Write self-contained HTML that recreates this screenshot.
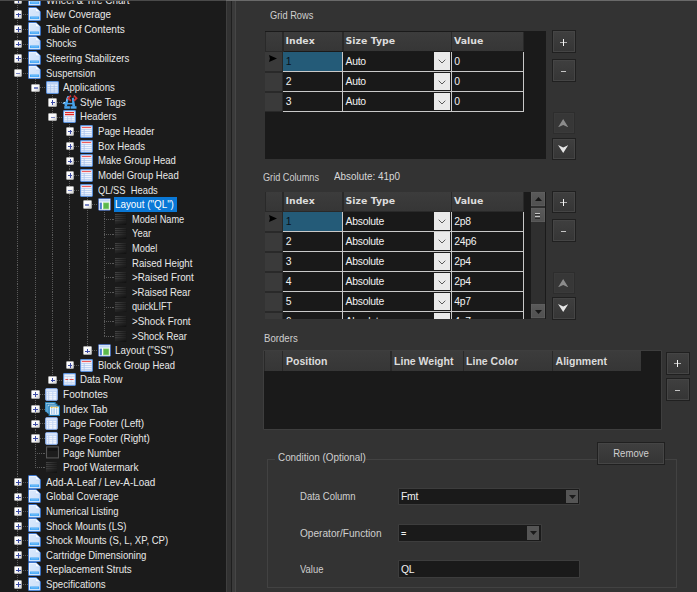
<!DOCTYPE html>
<html lang="en"><head><meta charset="utf-8"><title>Layout editor</title>
<style>
html,body{margin:0;padding:0;background:#333333;}
body{width:697px;height:592px;overflow:hidden;position:relative;font-family:"Liberation Sans",sans-serif;font-size:9.7px;color:#e4e4e4;}
#wrap{position:absolute;left:0;top:0;width:697px;height:592px;overflow:hidden;background:#333333;}
#tree{position:absolute;left:0;top:0;width:226px;height:592px;background:#1b1b1b;overflow:hidden;}
#tree div{position:absolute;}
.vl{width:1px;background:repeating-linear-gradient(to bottom,#5a5a5a 0,#5a5a5a 0.95px,transparent 0.95px,transparent 1.9px);}
.hl{height:1px;background:repeating-linear-gradient(to right,#5a5a5a 0,#5a5a5a 0.95px,transparent 0.95px,transparent 1.9px);}
.ex{width:8.8px;height:8.4px;box-sizing:border-box;border:0.7px solid #a9a9a9;border-radius:1px;background:linear-gradient(135deg,#ffffff 0%,#fbfbfb 50%,#cfcfcf 100%);}
.ex i{position:absolute;background:#3c4ca6;}
.ex i.h{left:1.4px;top:3.05px;width:4.6px;height:0.9px;}
.ex i.v{left:3.25px;top:1.2px;width:0.9px;height:4.6px;}
.ex.mi i.h{background:#7884c4;height:1.4px;top:2.9px;width:4px;left:1.7px;}
.ic{width:16px;height:14px;}
.ic svg{display:block;}
.t{white-space:nowrap;line-height:14.6px;height:14.6px;color:#e8e8e8;font-size:10.2px;transform:scaleX(0.94);transform-origin:0 50%;}
.ts{color:#ffffff;}
.sel{background:#0a78d6;}
#split{position:absolute;left:226px;top:0;width:10px;height:592px;background:#323232;}
#split i{position:absolute;top:0;height:592px;width:1px;}
#topline{position:absolute;left:226px;top:0;width:471px;height:1px;background:#6a6a6a;}
#topline2{position:absolute;left:0;top:0;width:226px;height:1px;background:#4a4a4a;}
#right{position:absolute;left:0;top:0;width:697px;height:592px;}
#right>div{position:absolute;}
.lb{white-space:nowrap;line-height:14.6px;color:#cfcfcf;font-size:10.2px;transform:scaleX(0.94);transform-origin:0 50%;margin-top:0.7px;}
.grid{background:#1a1a1a;overflow:hidden;}
.grid.dg{background:#1a1a1a;}
.grid div{position:absolute;}
.gh{background:linear-gradient(to bottom,#3c3c3c,#363636);}
.gh span{position:absolute;left:1.6px;top:1.9px;font-family:"DejaVu Sans","Liberation Sans",sans-serif;font-weight:bold;font-size:9.4px;line-height:14px;color:#dcdcdc;white-space:nowrap;}
.gh2{background:linear-gradient(to bottom,#3c3c3c,#363636);}
.gh2 span{position:absolute;left:2.5px;top:2.4px;font-family:"Liberation Sans",sans-serif;font-weight:bold;font-size:10.5px;line-height:14px;color:#dcdcdc;white-space:nowrap;}
.gb{box-shadow:0 0 0 0.6px #474747;}
.rh{background:#3a3a3a;}
.rh .arr{position:absolute;left:3.4px;top:2.9px;}
.cell{background:#191919;border-right:1px solid #c9c9c9;border-bottom:1px solid #c9c9c9;}
.cell span{position:absolute;left:2.4px;top:3.2px;line-height:14px;font-size:10.4px;letter-spacing:-0.25px;color:#f2f2f2;white-space:nowrap;}
.csel{background:#245b78;}
.csel span{color:#08121a;}
.dd{right:0.8px;top:0.6px;bottom:0.9px;width:16.1px;background:#e9e9e9;}
.dd svg{position:absolute;left:4px;top:7px;}
.sb{background:#2f2f2f;}
.sbb{left:0;width:14.6px;background:linear-gradient(to bottom,#5a5a5a,#505050);box-shadow:inset 0 0 0 0.6px #636363;}
.sbb svg{position:absolute;left:4px;top:5.2px;}
.sbt{left:0;width:14.6px;background:linear-gradient(to bottom,#5a5a5a,#505050);box-shadow:inset 0 0 0 0.6px #636363;}
.sbt i{position:absolute;left:4.6px;width:5.2px;height:1px;background:#c4c4c4;}
.sbt b{position:absolute;left:4.6px;width:5.2px;height:0.9px;background:#2c2c2c;}
.btn{background:linear-gradient(to bottom,#3f3f3f,#353535);border:1px solid #202020;box-sizing:border-box;box-shadow:inset 0 0 0 1px #454545;}
.btn.dis{background:#373737;border-color:#2d2d2d;box-shadow:inset 0 0 0 1px #3a3a3a;}
.btn i{position:absolute;}
.btn svg{position:absolute;left:50%;top:50%;margin:-4.5px 0 0 -6px;}
.ph{left:50%;top:50%;width:7.6px;height:1.1px;margin:0.1px 0 0 -4.2px;background:#b4b4b4;}
.pv{left:50%;top:50%;width:1.3px;height:6.8px;margin:-2.8px 0 0 -1.1px;background:#f4f4f4;}
.mh{left:50%;top:50%;width:4.8px;height:1.3px;margin:0.3px 0 0 -2.8px;background:#c4c4c4;}
.btn.txt span{position:absolute;left:0;right:0;top:4.3px;text-align:center;line-height:14px;color:#d0d0d0;font-size:10.2px;}
.gbx{border:1px solid #424242;box-sizing:border-box;}
.gbl{background:#333333;}
.inp{background:#1a1a1a;box-shadow:0 0 0 0.6px #454545;}
.inp span{position:absolute;left:1.8px;top:1.7px;line-height:14px;font-size:10.4px;letter-spacing:-0.25px;color:#f0f0f0;white-space:nowrap;}
.cb{position:absolute;right:1.2px;top:1.3px;bottom:1.3px;width:12.6px;background:#555555;}
.cb svg{position:absolute;left:3px;top:5px;}
</style></head>
<body><div id="wrap">
<div id="split"><i style="left:0;background:#3f3f3f"></i><i style="left:4.9px;background:#1f1f1f;width:1.3px"></i><i style="left:6.2px;background:#3a3a3a;width:3px"></i><i style="left:8.6px;background:#464646;width:0.9px"></i></div>
<div id="tree">
<div class="vl" style="left:17.40px;top:-10.00px;height:610.00px"></div>
<div class="vl" style="left:34.70px;top:78.54px;height:388.47px"></div>
<div class="vl" style="left:52.00px;top:93.15px;height:286.20px"></div>
<div class="vl" style="left:69.30px;top:122.37px;height:242.37px"></div>
<div class="vl" style="left:86.60px;top:195.42px;height:154.71px"></div>
<div class="vl" style="left:103.90px;top:210.03px;height:125.49px"></div>
<div class="hl" style="left:22.50px;top:-0.21px;width:5.70px"></div>
<div class="ex" style="left:13.60px;top:-4.16px"><i class="h"></i><i class="v"></i></div>
<div class="ic" style="left:28.20px;top:-7.61px"><svg width="13" height="14" viewBox="0 0 13 14"><defs><linearGradient id="u1" x1="0" x2="1" y1="0" y2="1"><stop offset="0" stop-color="#dbe9fc"/><stop offset="1" stop-color="#cbdff9"/></linearGradient></defs><path d="M1.1 0.5 H8 L12.4 4.7 V12.9 Q12.4 13.5 11.8 13.5 H1.1 Q0.5 13.5 0.5 12.9 V1.1 Q0.5 0.5 1.1 0.5 Z" fill="url(#u1)" stroke="#2f70d2" stroke-width="0.9"/><path d="M1.45 12.6 V1.45 H7.7" fill="none" stroke="#f3f8ff" stroke-width="0.8"/><path d="M8 0.9 V4.7 H12.1 Z" fill="#f7fbff"/><path d="M8 4.9 H12.1" stroke="#b4cff3" stroke-width="0.6"/><rect x="1.9" y="9.5" width="9.1" height="2.7" fill="#43a6f6"/><rect x="3" y="10.35" width="6.9" height="0.9" fill="#79c2fb"/><path d="M1.45 12.75 H11.5" stroke="#f3f8ff" stroke-width="0.6"/></svg></div>
<div class="t" style="left:45.80px;top:-6.41px;transform:scaleX(0.9691)">Wheel &amp; Tire Chart</div>
<div class="hl" style="left:22.50px;top:14.40px;width:5.70px"></div>
<div class="ex" style="left:13.60px;top:10.45px"><i class="h"></i><i class="v"></i></div>
<div class="ic" style="left:28.20px;top:7.00px"><svg width="13" height="14" viewBox="0 0 13 14"><defs><linearGradient id="u2" x1="0" x2="1" y1="0" y2="1"><stop offset="0" stop-color="#dbe9fc"/><stop offset="1" stop-color="#cbdff9"/></linearGradient></defs><path d="M1.1 0.5 H8 L12.4 4.7 V12.9 Q12.4 13.5 11.8 13.5 H1.1 Q0.5 13.5 0.5 12.9 V1.1 Q0.5 0.5 1.1 0.5 Z" fill="url(#u2)" stroke="#2f70d2" stroke-width="0.9"/><path d="M1.45 12.6 V1.45 H7.7" fill="none" stroke="#f3f8ff" stroke-width="0.8"/><path d="M8 0.9 V4.7 H12.1 Z" fill="#f7fbff"/><path d="M8 4.9 H12.1" stroke="#b4cff3" stroke-width="0.6"/><rect x="1.9" y="9.5" width="9.1" height="2.7" fill="#43a6f6"/><rect x="3" y="10.35" width="6.9" height="0.9" fill="#79c2fb"/><path d="M1.45 12.75 H11.5" stroke="#f3f8ff" stroke-width="0.6"/></svg></div>
<div class="t" style="left:45.80px;top:8.20px;transform:scaleX(0.9645)">New Coverage</div>
<div class="hl" style="left:22.50px;top:29.01px;width:5.70px"></div>
<div class="ex" style="left:13.60px;top:25.06px"><i class="h"></i><i class="v"></i></div>
<div class="ic" style="left:28.20px;top:21.61px"><svg width="13" height="14" viewBox="0 0 13 14"><defs><linearGradient id="u3" x1="0" x2="1" y1="0" y2="1"><stop offset="0" stop-color="#dbe9fc"/><stop offset="1" stop-color="#cbdff9"/></linearGradient></defs><path d="M1.1 0.5 H8 L12.4 4.7 V12.9 Q12.4 13.5 11.8 13.5 H1.1 Q0.5 13.5 0.5 12.9 V1.1 Q0.5 0.5 1.1 0.5 Z" fill="url(#u3)" stroke="#2f70d2" stroke-width="0.9"/><path d="M1.45 12.6 V1.45 H7.7" fill="none" stroke="#f3f8ff" stroke-width="0.8"/><path d="M8 0.9 V4.7 H12.1 Z" fill="#f7fbff"/><path d="M8 4.9 H12.1" stroke="#b4cff3" stroke-width="0.6"/><rect x="1.9" y="9.5" width="9.1" height="2.7" fill="#43a6f6"/><rect x="3" y="10.35" width="6.9" height="0.9" fill="#79c2fb"/><path d="M1.45 12.75 H11.5" stroke="#f3f8ff" stroke-width="0.6"/></svg></div>
<div class="t" style="left:45.80px;top:22.81px;transform:scaleX(0.9937)">Table of Contents</div>
<div class="hl" style="left:22.50px;top:43.62px;width:5.70px"></div>
<div class="ex" style="left:13.60px;top:39.67px"><i class="h"></i><i class="v"></i></div>
<div class="ic" style="left:28.20px;top:36.22px"><svg width="13" height="14" viewBox="0 0 13 14"><defs><linearGradient id="u4" x1="0" x2="1" y1="0" y2="1"><stop offset="0" stop-color="#dbe9fc"/><stop offset="1" stop-color="#cbdff9"/></linearGradient></defs><path d="M1.1 0.5 H8 L12.4 4.7 V12.9 Q12.4 13.5 11.8 13.5 H1.1 Q0.5 13.5 0.5 12.9 V1.1 Q0.5 0.5 1.1 0.5 Z" fill="url(#u4)" stroke="#2f70d2" stroke-width="0.9"/><path d="M1.45 12.6 V1.45 H7.7" fill="none" stroke="#f3f8ff" stroke-width="0.8"/><path d="M8 0.9 V4.7 H12.1 Z" fill="#f7fbff"/><path d="M8 4.9 H12.1" stroke="#b4cff3" stroke-width="0.6"/><rect x="1.9" y="9.5" width="9.1" height="2.7" fill="#43a6f6"/><rect x="3" y="10.35" width="6.9" height="0.9" fill="#79c2fb"/><path d="M1.45 12.75 H11.5" stroke="#f3f8ff" stroke-width="0.6"/></svg></div>
<div class="t" style="left:45.80px;top:37.42px;transform:scaleX(0.9126)">Shocks</div>
<div class="hl" style="left:22.50px;top:58.23px;width:5.70px"></div>
<div class="ex" style="left:13.60px;top:54.28px"><i class="h"></i><i class="v"></i></div>
<div class="ic" style="left:28.20px;top:50.83px"><svg width="13" height="14" viewBox="0 0 13 14"><defs><linearGradient id="u5" x1="0" x2="1" y1="0" y2="1"><stop offset="0" stop-color="#dbe9fc"/><stop offset="1" stop-color="#cbdff9"/></linearGradient></defs><path d="M1.1 0.5 H8 L12.4 4.7 V12.9 Q12.4 13.5 11.8 13.5 H1.1 Q0.5 13.5 0.5 12.9 V1.1 Q0.5 0.5 1.1 0.5 Z" fill="url(#u5)" stroke="#2f70d2" stroke-width="0.9"/><path d="M1.45 12.6 V1.45 H7.7" fill="none" stroke="#f3f8ff" stroke-width="0.8"/><path d="M8 0.9 V4.7 H12.1 Z" fill="#f7fbff"/><path d="M8 4.9 H12.1" stroke="#b4cff3" stroke-width="0.6"/><rect x="1.9" y="9.5" width="9.1" height="2.7" fill="#43a6f6"/><rect x="3" y="10.35" width="6.9" height="0.9" fill="#79c2fb"/><path d="M1.45 12.75 H11.5" stroke="#f3f8ff" stroke-width="0.6"/></svg></div>
<div class="t" style="left:45.80px;top:52.03px;transform:scaleX(0.9501)">Steering Stabilizers</div>
<div class="hl" style="left:22.50px;top:72.84px;width:5.70px"></div>
<div class="ex mi" style="left:13.60px;top:68.89px"><i class="h"></i></div>
<div class="ic" style="left:28.20px;top:65.44px"><svg width="13" height="14" viewBox="0 0 13 14"><defs><linearGradient id="u6" x1="0" x2="1" y1="0" y2="1"><stop offset="0" stop-color="#dbe9fc"/><stop offset="1" stop-color="#cbdff9"/></linearGradient></defs><path d="M1.1 0.5 H8 L12.4 4.7 V12.9 Q12.4 13.5 11.8 13.5 H1.1 Q0.5 13.5 0.5 12.9 V1.1 Q0.5 0.5 1.1 0.5 Z" fill="url(#u6)" stroke="#2f70d2" stroke-width="0.9"/><path d="M1.45 12.6 V1.45 H7.7" fill="none" stroke="#f3f8ff" stroke-width="0.8"/><path d="M8 0.9 V4.7 H12.1 Z" fill="#f7fbff"/><path d="M8 4.9 H12.1" stroke="#b4cff3" stroke-width="0.6"/><rect x="1.9" y="9.5" width="9.1" height="2.7" fill="#43a6f6"/><rect x="3" y="10.35" width="6.9" height="0.9" fill="#79c2fb"/><path d="M1.45 12.75 H11.5" stroke="#f3f8ff" stroke-width="0.6"/></svg></div>
<div class="t" style="left:45.80px;top:66.64px;transform:scaleX(0.9277)">Suspension</div>
<div class="hl" style="left:39.80px;top:87.45px;width:5.70px"></div>
<div class="ex mi" style="left:30.90px;top:83.50px"><i class="h"></i></div>
<div class="ic" style="left:45.50px;top:80.55px"><svg width="13" height="13" viewBox="0 0 13 13"><rect x="0.6" y="0.6" width="11.8" height="11.8" rx="0.8" fill="#e6effc" stroke="#5a90db" stroke-width="1.1"/><rect x="1.3" y="1.3" width="10.4" height="2.2" fill="#b9d0f3"/><path d="M1.3 5.6H11.7M1.3 7.8H11.7M1.3 10H11.7M4.6 3.6V11.7M8.2 3.6V11.7" stroke="#a9c4ee" stroke-width="0.8" fill="none"/></svg></div>
<div class="t" style="left:63.10px;top:81.25px;transform:scaleX(0.9429)">Applications</div>
<div class="hl" style="left:57.10px;top:102.06px;width:5.70px"></div>
<div class="ex" style="left:48.20px;top:98.11px"><i class="h"></i><i class="v"></i></div>
<div class="ic" style="left:61.50px;top:94.96px"><svg width="16" height="14" viewBox="0 0 16 14"><g fill="#48a4ec"><path d="M2.4 11.4L5.3 0.9H7.3L4.9 11.4Z"/><path d="M9.9 3.2L11.7 2.4L13.2 11.4H10.4Z"/><rect x="2.3" y="11.2" width="5.6" height="2.5"/><rect x="8.6" y="11.2" width="5.9" height="2.5"/><rect x="4.4" y="7.9" width="6.6" height="1.5"/><path d="M0.2 8.2L3.6 6.4L4.4 7.9L3.4 10.1Z"/></g><path d="M4.3 6L5.4 2.2" stroke="#9fd2fa" stroke-width="0.7"/><path d="M1.2 8.2L2.9 7.4" stroke="#eaf7ff" stroke-width="0.9"/><path d="M8.9 0.6L6.2 3.2L8.9 5.9" stroke="#cc3636" stroke-width="1.7" fill="none"/><path d="M11.9 0.6L14.6 3.2L11.9 5.9" stroke="#cc3636" stroke-width="1.7" fill="none"/></svg></div>
<div class="t" style="left:80.40px;top:95.86px;transform:scaleX(0.9762)">Style Tags</div>
<div class="hl" style="left:57.10px;top:116.67px;width:5.70px"></div>
<div class="ex mi" style="left:48.20px;top:112.72px"><i class="h"></i></div>
<div class="ic" style="left:62.80px;top:109.77px"><svg width="13" height="13" viewBox="0 0 13 13"><rect x="0.6" y="0.6" width="11.8" height="11.8" rx="0.8" fill="#fbfcff" stroke="#5a90db" stroke-width="1.1"/><path d="M2 2.6H11M2 4.6H11" stroke="#e02828" stroke-width="1.1"/><path d="M1.3 6.6H11.7M1.3 8.8H11.7M1.3 10.6H11.7M4.6 6.6V11.7M8.2 6.6V11.7" stroke="#b4cbf0" stroke-width="0.8" fill="none"/></svg></div>
<div class="t" style="left:80.40px;top:110.47px;transform:scaleX(0.9477)">Headers</div>
<div class="hl" style="left:74.40px;top:131.28px;width:5.70px"></div>
<div class="ex" style="left:65.50px;top:127.33px"><i class="h"></i><i class="v"></i></div>
<div class="ic" style="left:80.10px;top:125.18px"><svg width="13" height="13" viewBox="0 0 13 13"><rect x="0.6" y="0.6" width="11.8" height="11.8" rx="0.8" fill="#f6f9ff" stroke="#5a90db" stroke-width="1.1"/><path d="M1.8 2.5H11.2" stroke="#ee5c5c" stroke-width="1.2"/><path d="M1.3 4.6H11.7M1.3 6.6H11.7M1.3 8.6H11.7M1.3 10.4H11.7M4.2 4.2V11.7" stroke="#a9c4ee" stroke-width="0.8" fill="none"/></svg></div>
<div class="t" style="left:97.70px;top:125.08px;transform:scaleX(0.9393)">Page Header</div>
<div class="hl" style="left:74.40px;top:145.89px;width:5.70px"></div>
<div class="ex" style="left:65.50px;top:141.94px"><i class="h"></i><i class="v"></i></div>
<div class="ic" style="left:80.10px;top:139.79px"><svg width="13" height="13" viewBox="0 0 13 13"><rect x="0.6" y="0.6" width="11.8" height="11.8" rx="0.8" fill="#f6f9ff" stroke="#5a90db" stroke-width="1.1"/><path d="M1.8 2.5H11.2" stroke="#ee5c5c" stroke-width="1.2"/><path d="M1.3 4.6H11.7M1.3 6.6H11.7M1.3 8.6H11.7M1.3 10.4H11.7M4.2 4.2V11.7" stroke="#a9c4ee" stroke-width="0.8" fill="none"/></svg></div>
<div class="t" style="left:97.70px;top:139.69px;transform:scaleX(0.9450)">Box Heads</div>
<div class="hl" style="left:74.40px;top:160.50px;width:5.70px"></div>
<div class="ex" style="left:65.50px;top:156.55px"><i class="h"></i><i class="v"></i></div>
<div class="ic" style="left:80.10px;top:154.40px"><svg width="13" height="13" viewBox="0 0 13 13"><rect x="0.6" y="0.6" width="11.8" height="11.8" rx="0.8" fill="#f6f9ff" stroke="#5a90db" stroke-width="1.1"/><path d="M1.8 2.5H11.2" stroke="#ee5c5c" stroke-width="1.2"/><path d="M1.3 4.6H11.7M1.3 6.6H11.7M1.3 8.6H11.7M1.3 10.4H11.7M4.2 4.2V11.7" stroke="#a9c4ee" stroke-width="0.8" fill="none"/></svg></div>
<div class="t" style="left:97.70px;top:154.30px;transform:scaleX(0.9357)">Make Group Head</div>
<div class="hl" style="left:74.40px;top:175.11px;width:5.70px"></div>
<div class="ex" style="left:65.50px;top:171.16px"><i class="h"></i><i class="v"></i></div>
<div class="ic" style="left:80.10px;top:169.01px"><svg width="13" height="13" viewBox="0 0 13 13"><rect x="0.6" y="0.6" width="11.8" height="11.8" rx="0.8" fill="#f6f9ff" stroke="#5a90db" stroke-width="1.1"/><path d="M1.8 2.5H11.2" stroke="#ee5c5c" stroke-width="1.2"/><path d="M1.3 4.6H11.7M1.3 6.6H11.7M1.3 8.6H11.7M1.3 10.4H11.7M4.2 4.2V11.7" stroke="#a9c4ee" stroke-width="0.8" fill="none"/></svg></div>
<div class="t" style="left:97.70px;top:168.91px;transform:scaleX(0.9375)">Model Group Head</div>
<div class="hl" style="left:74.40px;top:189.72px;width:5.70px"></div>
<div class="ex mi" style="left:65.50px;top:185.77px"><i class="h"></i></div>
<div class="ic" style="left:80.10px;top:183.62px"><svg width="13" height="13" viewBox="0 0 13 13"><rect x="0.6" y="0.6" width="11.8" height="11.8" rx="0.8" fill="#f6f9ff" stroke="#5a90db" stroke-width="1.1"/><path d="M1.8 2.5H11.2" stroke="#ee5c5c" stroke-width="1.2"/><path d="M1.3 4.6H11.7M1.3 6.6H11.7M1.3 8.6H11.7M1.3 10.4H11.7M4.2 4.2V11.7" stroke="#a9c4ee" stroke-width="0.8" fill="none"/></svg></div>
<div class="t" style="left:97.70px;top:183.52px;transform:scaleX(0.9182)">QL/SS&nbsp; Heads</div>
<div class="hl" style="left:91.70px;top:204.33px;width:5.70px"></div>
<div class="ex mi" style="left:82.80px;top:200.38px"><i class="h"></i></div>
<div class="ic" style="left:97.80px;top:198.13px"><svg width="13" height="13" viewBox="0 0 13 13"><rect x="0.5" y="0.5" width="12" height="11.8" rx="0.8" fill="#fbfdff" stroke="#4468b4" stroke-width="0.9"/><rect x="1.3" y="1.3" width="10.4" height="2.3" fill="#c0d8f6"/><rect x="1.7" y="4.6" width="2.2" height="6.6" fill="#4c80cc"/><rect x="5.3" y="4.9" width="5.6" height="6" fill="#5cb84c" stroke="#8fd67c" stroke-width="0.6"/></svg></div>
<div class="sel" style="left:114.10px;top:196.73px;width:62.8px;height:15px"></div>
<div class="t ts" style="left:115.00px;top:198.13px;transform:scaleX(0.9651)">Layout ("QL")</div>
<div class="hl" style="left:104.40px;top:218.94px;width:10.30px"></div>
<div class="ic" style="left:115.40px;top:213.84px"><svg width="11.2" height="10.8" viewBox="0 0 11.2 10.8"><defs><linearGradient id="u7" x1="0" x2="1" y1="0" y2="0"><stop offset="0" stop-color="#565656"/><stop offset="1" stop-color="#242424"/></linearGradient><linearGradient id="u8" x1="0" x2="1" y1="0" y2="1"><stop offset="0" stop-color="#2c2c2c"/><stop offset="1" stop-color="#0e0e0e"/></linearGradient></defs><rect x="0" y="0" width="11.2" height="10.8" fill="#181818"/><path d="M0 0.7H11.2M0 2.75H11.2M0 4.8H11.2M0 6.85H11.2" stroke="url(#u7)" stroke-width="0.9"/><rect x="0" y="8.2" width="11.2" height="2.6" fill="url(#u8)"/></svg></div>
<div class="t" style="left:132.30px;top:212.74px;transform:scaleX(0.9037)">Model Name</div>
<div class="hl" style="left:104.40px;top:233.55px;width:10.30px"></div>
<div class="ic" style="left:115.40px;top:228.45px"><svg width="11.2" height="10.8" viewBox="0 0 11.2 10.8"><defs><linearGradient id="u9" x1="0" x2="1" y1="0" y2="0"><stop offset="0" stop-color="#565656"/><stop offset="1" stop-color="#242424"/></linearGradient><linearGradient id="u10" x1="0" x2="1" y1="0" y2="1"><stop offset="0" stop-color="#2c2c2c"/><stop offset="1" stop-color="#0e0e0e"/></linearGradient></defs><rect x="0" y="0" width="11.2" height="10.8" fill="#181818"/><path d="M0 0.7H11.2M0 2.75H11.2M0 4.8H11.2M0 6.85H11.2" stroke="url(#u9)" stroke-width="0.9"/><rect x="0" y="8.2" width="11.2" height="2.6" fill="url(#u10)"/></svg></div>
<div class="t" style="left:132.30px;top:227.35px;transform:scaleX(0.9275)">Year</div>
<div class="hl" style="left:104.40px;top:248.16px;width:10.30px"></div>
<div class="ic" style="left:115.40px;top:243.06px"><svg width="11.2" height="10.8" viewBox="0 0 11.2 10.8"><defs><linearGradient id="u11" x1="0" x2="1" y1="0" y2="0"><stop offset="0" stop-color="#565656"/><stop offset="1" stop-color="#242424"/></linearGradient><linearGradient id="u12" x1="0" x2="1" y1="0" y2="1"><stop offset="0" stop-color="#2c2c2c"/><stop offset="1" stop-color="#0e0e0e"/></linearGradient></defs><rect x="0" y="0" width="11.2" height="10.8" fill="#181818"/><path d="M0 0.7H11.2M0 2.75H11.2M0 4.8H11.2M0 6.85H11.2" stroke="url(#u11)" stroke-width="0.9"/><rect x="0" y="8.2" width="11.2" height="2.6" fill="url(#u12)"/></svg></div>
<div class="t" style="left:132.30px;top:241.96px;transform:scaleX(0.9117)">Model</div>
<div class="hl" style="left:104.40px;top:262.77px;width:10.30px"></div>
<div class="ic" style="left:115.40px;top:257.67px"><svg width="11.2" height="10.8" viewBox="0 0 11.2 10.8"><defs><linearGradient id="u13" x1="0" x2="1" y1="0" y2="0"><stop offset="0" stop-color="#565656"/><stop offset="1" stop-color="#242424"/></linearGradient><linearGradient id="u14" x1="0" x2="1" y1="0" y2="1"><stop offset="0" stop-color="#2c2c2c"/><stop offset="1" stop-color="#0e0e0e"/></linearGradient></defs><rect x="0" y="0" width="11.2" height="10.8" fill="#181818"/><path d="M0 0.7H11.2M0 2.75H11.2M0 4.8H11.2M0 6.85H11.2" stroke="url(#u13)" stroke-width="0.9"/><rect x="0" y="8.2" width="11.2" height="2.6" fill="url(#u14)"/></svg></div>
<div class="t" style="left:132.30px;top:256.57px;transform:scaleX(0.9437)">Raised Height</div>
<div class="hl" style="left:104.40px;top:277.38px;width:10.30px"></div>
<div class="ic" style="left:115.40px;top:272.28px"><svg width="11.2" height="10.8" viewBox="0 0 11.2 10.8"><defs><linearGradient id="u15" x1="0" x2="1" y1="0" y2="0"><stop offset="0" stop-color="#565656"/><stop offset="1" stop-color="#242424"/></linearGradient><linearGradient id="u16" x1="0" x2="1" y1="0" y2="1"><stop offset="0" stop-color="#2c2c2c"/><stop offset="1" stop-color="#0e0e0e"/></linearGradient></defs><rect x="0" y="0" width="11.2" height="10.8" fill="#181818"/><path d="M0 0.7H11.2M0 2.75H11.2M0 4.8H11.2M0 6.85H11.2" stroke="url(#u15)" stroke-width="0.9"/><rect x="0" y="8.2" width="11.2" height="2.6" fill="url(#u16)"/></svg></div>
<div class="t" style="left:132.30px;top:271.18px;transform:scaleX(0.9614)">&gt;Raised Front</div>
<div class="hl" style="left:104.40px;top:291.99px;width:10.30px"></div>
<div class="ic" style="left:115.40px;top:286.89px"><svg width="11.2" height="10.8" viewBox="0 0 11.2 10.8"><defs><linearGradient id="u17" x1="0" x2="1" y1="0" y2="0"><stop offset="0" stop-color="#565656"/><stop offset="1" stop-color="#242424"/></linearGradient><linearGradient id="u18" x1="0" x2="1" y1="0" y2="1"><stop offset="0" stop-color="#2c2c2c"/><stop offset="1" stop-color="#0e0e0e"/></linearGradient></defs><rect x="0" y="0" width="11.2" height="10.8" fill="#181818"/><path d="M0 0.7H11.2M0 2.75H11.2M0 4.8H11.2M0 6.85H11.2" stroke="url(#u17)" stroke-width="0.9"/><rect x="0" y="8.2" width="11.2" height="2.6" fill="url(#u18)"/></svg></div>
<div class="t" style="left:132.30px;top:285.79px;transform:scaleX(0.9364)">&gt;Raised Rear</div>
<div class="hl" style="left:104.40px;top:306.60px;width:10.30px"></div>
<div class="ic" style="left:115.40px;top:301.50px"><svg width="11.2" height="10.8" viewBox="0 0 11.2 10.8"><defs><linearGradient id="u19" x1="0" x2="1" y1="0" y2="0"><stop offset="0" stop-color="#565656"/><stop offset="1" stop-color="#242424"/></linearGradient><linearGradient id="u20" x1="0" x2="1" y1="0" y2="1"><stop offset="0" stop-color="#2c2c2c"/><stop offset="1" stop-color="#0e0e0e"/></linearGradient></defs><rect x="0" y="0" width="11.2" height="10.8" fill="#181818"/><path d="M0 0.7H11.2M0 2.75H11.2M0 4.8H11.2M0 6.85H11.2" stroke="url(#u19)" stroke-width="0.9"/><rect x="0" y="8.2" width="11.2" height="2.6" fill="url(#u20)"/></svg></div>
<div class="t" style="left:132.30px;top:300.40px;transform:scaleX(0.8986)">quickLIFT</div>
<div class="hl" style="left:104.40px;top:321.21px;width:10.30px"></div>
<div class="ic" style="left:115.40px;top:316.11px"><svg width="11.2" height="10.8" viewBox="0 0 11.2 10.8"><defs><linearGradient id="u21" x1="0" x2="1" y1="0" y2="0"><stop offset="0" stop-color="#565656"/><stop offset="1" stop-color="#242424"/></linearGradient><linearGradient id="u22" x1="0" x2="1" y1="0" y2="1"><stop offset="0" stop-color="#2c2c2c"/><stop offset="1" stop-color="#0e0e0e"/></linearGradient></defs><rect x="0" y="0" width="11.2" height="10.8" fill="#181818"/><path d="M0 0.7H11.2M0 2.75H11.2M0 4.8H11.2M0 6.85H11.2" stroke="url(#u21)" stroke-width="0.9"/><rect x="0" y="8.2" width="11.2" height="2.6" fill="url(#u22)"/></svg></div>
<div class="t" style="left:132.30px;top:315.01px;transform:scaleX(0.9626)">&gt;Shock Front</div>
<div class="hl" style="left:104.40px;top:335.82px;width:10.30px"></div>
<div class="ic" style="left:115.40px;top:330.72px"><svg width="11.2" height="10.8" viewBox="0 0 11.2 10.8"><defs><linearGradient id="u23" x1="0" x2="1" y1="0" y2="0"><stop offset="0" stop-color="#565656"/><stop offset="1" stop-color="#242424"/></linearGradient><linearGradient id="u24" x1="0" x2="1" y1="0" y2="1"><stop offset="0" stop-color="#2c2c2c"/><stop offset="1" stop-color="#0e0e0e"/></linearGradient></defs><rect x="0" y="0" width="11.2" height="10.8" fill="#181818"/><path d="M0 0.7H11.2M0 2.75H11.2M0 4.8H11.2M0 6.85H11.2" stroke="url(#u23)" stroke-width="0.9"/><rect x="0" y="8.2" width="11.2" height="2.6" fill="url(#u24)"/></svg></div>
<div class="t" style="left:132.30px;top:329.62px;transform:scaleX(0.9293)">&gt;Shock Rear</div>
<div class="hl" style="left:91.70px;top:350.43px;width:5.70px"></div>
<div class="ex" style="left:82.80px;top:346.48px"><i class="h"></i><i class="v"></i></div>
<div class="ic" style="left:97.80px;top:344.23px"><svg width="13" height="13" viewBox="0 0 13 13"><rect x="0.5" y="0.5" width="12" height="11.8" rx="0.8" fill="#fbfdff" stroke="#4468b4" stroke-width="0.9"/><rect x="1.3" y="1.3" width="10.4" height="2.3" fill="#c0d8f6"/><rect x="1.7" y="4.6" width="2.2" height="6.6" fill="#4c80cc"/><rect x="5.3" y="4.9" width="5.6" height="6" fill="#5cb84c" stroke="#8fd67c" stroke-width="0.6"/></svg></div>
<div class="t" style="left:115.00px;top:344.23px;transform:scaleX(0.9602)">Layout ("SS")</div>
<div class="hl" style="left:74.40px;top:365.04px;width:5.70px"></div>
<div class="ex" style="left:65.50px;top:361.09px"><i class="h"></i><i class="v"></i></div>
<div class="ic" style="left:80.10px;top:358.94px"><svg width="13" height="13" viewBox="0 0 13 13"><rect x="0.6" y="0.6" width="11.8" height="11.8" rx="0.8" fill="#f6f9ff" stroke="#5a90db" stroke-width="1.1"/><path d="M1.8 2.5H11.2" stroke="#ee5c5c" stroke-width="1.2"/><path d="M1.3 4.6H11.7M1.3 6.6H11.7M1.3 8.6H11.7M1.3 10.4H11.7M4.2 4.2V11.7" stroke="#a9c4ee" stroke-width="0.8" fill="none"/></svg></div>
<div class="t" style="left:97.70px;top:358.84px;transform:scaleX(0.9249)">Block Group Head</div>
<div class="hl" style="left:57.10px;top:379.65px;width:5.70px"></div>
<div class="ex" style="left:48.20px;top:375.70px"><i class="h"></i><i class="v"></i></div>
<div class="ic" style="left:62.80px;top:373.25px"><svg width="13" height="13" viewBox="0 0 13 13"><rect x="0.6" y="0.6" width="11.8" height="11.8" rx="0.8" fill="#eef3fd" stroke="#5a90db" stroke-width="1.1"/><path d="M1.3 3.4H11.7M1.3 9.4H11.7M1.3 11H11.7" stroke="#b9cff2" stroke-width="0.8" fill="none"/><path d="M4.4 3.4V11.7M8.2 3.4V11.7" stroke="#c6d8f5" stroke-width="0.7"/><path d="M2.4 6.5H5.2M6.6 6.5H10.6" stroke="#e05050" stroke-width="1.2"/></svg></div>
<div class="t" style="left:80.40px;top:373.45px;transform:scaleX(0.9501)">Data Row</div>
<div class="hl" style="left:39.80px;top:394.26px;width:5.70px"></div>
<div class="ex" style="left:30.90px;top:390.31px"><i class="h"></i><i class="v"></i></div>
<div class="ic" style="left:45.20px;top:387.86px"><svg width="13" height="13" viewBox="0 0 13 13"><rect x="0.6" y="0.6" width="11.8" height="11.8" rx="1" fill="#c5d7f6" stroke="#86abe6" stroke-width="1"/><rect x="1.2" y="1.2" width="10.6" height="1.9" fill="#d8e5fa"/><path d="M2.1 4.7H3.1M2.1 6.8H3.1M2.1 8.9H3.1M2.1 10.9H3.1M4.3 4.7H7.3M4.3 6.8H7.3M4.3 8.9H7.3M4.3 10.9H7.3M8.3 4.7H11.2M8.3 6.8H11.2M8.3 8.9H11.2M8.3 10.9H11.2" stroke="#ffffff" stroke-width="1.1"/></svg></div>
<div class="t" style="left:63.10px;top:388.06px;transform:scaleX(0.9909)">Footnotes</div>
<div class="hl" style="left:39.80px;top:408.87px;width:5.70px"></div>
<div class="ex" style="left:30.90px;top:404.92px"><i class="h"></i><i class="v"></i></div>
<div class="ic" style="left:44.50px;top:402.07px"><svg width="15" height="14" viewBox="0 0 15 14"><rect x="0.6" y="0.6" width="9.6" height="8.6" fill="#eaf5fc" stroke="#227fb8" stroke-width="1.1"/><rect x="2.3" y="2.2" width="9.6" height="8.6" fill="#eaf5fc" stroke="#227fb8" stroke-width="1.1"/><path d="M0.6 1L4 4.4V12L0.6 9.2Z" fill="#5aa5d6"/><rect x="4.2" y="4" width="10.2" height="9.4" fill="#ffffff" stroke="#1f7ab4" stroke-width="1.2"/><path d="M5.8 5.4H7.6M8.6 5.4H9.6M10.6 5.4H12.6" stroke="#f0c040" stroke-width="1.1"/><path d="M6.7 6.2V12.2M9.1 6.2V12.2M11.6 6.2V12.2" stroke="#a9cdee" stroke-width="1.5"/></svg></div>
<div class="t" style="left:63.10px;top:402.67px;transform:scaleX(1.0136)">Index Tab</div>
<div class="hl" style="left:39.80px;top:423.48px;width:5.70px"></div>
<div class="ex" style="left:30.90px;top:419.53px"><i class="h"></i><i class="v"></i></div>
<div class="ic" style="left:45.20px;top:417.08px"><svg width="13" height="13" viewBox="0 0 13 13"><rect x="0.6" y="0.6" width="11.8" height="11.8" rx="1" fill="#c5d7f6" stroke="#86abe6" stroke-width="1"/><rect x="1.2" y="1.2" width="10.6" height="1.9" fill="#d8e5fa"/><path d="M2.1 4.7H3.1M2.1 6.8H3.1M2.1 8.9H3.1M2.1 10.9H3.1M4.3 4.7H7.3M4.3 6.8H7.3M4.3 8.9H7.3M4.3 10.9H7.3M8.3 4.7H11.2M8.3 6.8H11.2M8.3 8.9H11.2M8.3 10.9H11.2" stroke="#ffffff" stroke-width="1.1"/></svg></div>
<div class="t" style="left:63.10px;top:417.28px;transform:scaleX(0.9820)">Page Footer (Left)</div>
<div class="hl" style="left:39.80px;top:438.09px;width:5.70px"></div>
<div class="ex" style="left:30.90px;top:434.14px"><i class="h"></i><i class="v"></i></div>
<div class="ic" style="left:45.20px;top:431.69px"><svg width="13" height="13" viewBox="0 0 13 13"><rect x="0.6" y="0.6" width="11.8" height="11.8" rx="1" fill="#c5d7f6" stroke="#86abe6" stroke-width="1"/><rect x="1.2" y="1.2" width="10.6" height="1.9" fill="#d8e5fa"/><path d="M2.1 4.7H3.1M2.1 6.8H3.1M2.1 8.9H3.1M2.1 10.9H3.1M4.3 4.7H7.3M4.3 6.8H7.3M4.3 8.9H7.3M4.3 10.9H7.3M8.3 4.7H11.2M8.3 6.8H11.2M8.3 8.9H11.2M8.3 10.9H11.2" stroke="#ffffff" stroke-width="1.1"/></svg></div>
<div class="t" style="left:63.10px;top:431.89px;transform:scaleX(0.9713)">Page Footer (Right)</div>
<div class="hl" style="left:35.20px;top:452.70px;width:10.30px"></div>
<div class="ic" style="left:45.50px;top:445.80px"><svg width="13" height="13" viewBox="0 0 13 13"><rect x="0.6" y="0.9" width="11.8" height="11" fill="#141414" stroke="#5a5a5a" stroke-width="1.1"/><path d="M1.4 6H11.6M1.4 8H11.6M1.4 10H11.6" stroke="#262626" stroke-width="1"/></svg></div>
<div class="t" style="left:63.10px;top:446.50px;transform:scaleX(0.9147)">Page Number</div>
<div class="hl" style="left:35.20px;top:467.31px;width:10.30px"></div>
<div class="ic" style="left:46.20px;top:462.21px"><svg width="11.2" height="10.8" viewBox="0 0 11.2 10.8"><defs><linearGradient id="u25" x1="0" x2="1" y1="0" y2="0"><stop offset="0" stop-color="#565656"/><stop offset="1" stop-color="#242424"/></linearGradient><linearGradient id="u26" x1="0" x2="1" y1="0" y2="1"><stop offset="0" stop-color="#2c2c2c"/><stop offset="1" stop-color="#0e0e0e"/></linearGradient></defs><rect x="0" y="0" width="11.2" height="10.8" fill="#181818"/><path d="M0 0.7H11.2M0 2.75H11.2M0 4.8H11.2M0 6.85H11.2" stroke="url(#u25)" stroke-width="0.9"/><rect x="0" y="8.2" width="11.2" height="2.6" fill="url(#u26)"/></svg></div>
<div class="t" style="left:63.10px;top:461.11px;transform:scaleX(0.9853)">Proof Watermark</div>
<div class="hl" style="left:22.50px;top:481.92px;width:5.70px"></div>
<div class="ex" style="left:13.60px;top:477.97px"><i class="h"></i><i class="v"></i></div>
<div class="ic" style="left:28.20px;top:474.52px"><svg width="13" height="14" viewBox="0 0 13 14"><defs><linearGradient id="u27" x1="0" x2="1" y1="0" y2="1"><stop offset="0" stop-color="#dbe9fc"/><stop offset="1" stop-color="#cbdff9"/></linearGradient></defs><path d="M1.1 0.5 H8 L12.4 4.7 V12.9 Q12.4 13.5 11.8 13.5 H1.1 Q0.5 13.5 0.5 12.9 V1.1 Q0.5 0.5 1.1 0.5 Z" fill="url(#u27)" stroke="#2f70d2" stroke-width="0.9"/><path d="M1.45 12.6 V1.45 H7.7" fill="none" stroke="#f3f8ff" stroke-width="0.8"/><path d="M8 0.9 V4.7 H12.1 Z" fill="#f7fbff"/><path d="M8 4.9 H12.1" stroke="#b4cff3" stroke-width="0.6"/><rect x="1.9" y="9.5" width="9.1" height="2.7" fill="#43a6f6"/><rect x="3" y="10.35" width="6.9" height="0.9" fill="#79c2fb"/><path d="M1.45 12.75 H11.5" stroke="#f3f8ff" stroke-width="0.6"/></svg></div>
<div class="t" style="left:45.80px;top:475.72px;transform:scaleX(0.9689)">Add-A-Leaf / Lev-A-Load</div>
<div class="hl" style="left:22.50px;top:496.53px;width:5.70px"></div>
<div class="ex" style="left:13.60px;top:492.58px"><i class="h"></i><i class="v"></i></div>
<div class="ic" style="left:28.20px;top:489.13px"><svg width="13" height="14" viewBox="0 0 13 14"><defs><linearGradient id="u28" x1="0" x2="1" y1="0" y2="1"><stop offset="0" stop-color="#dbe9fc"/><stop offset="1" stop-color="#cbdff9"/></linearGradient></defs><path d="M1.1 0.5 H8 L12.4 4.7 V12.9 Q12.4 13.5 11.8 13.5 H1.1 Q0.5 13.5 0.5 12.9 V1.1 Q0.5 0.5 1.1 0.5 Z" fill="url(#u28)" stroke="#2f70d2" stroke-width="0.9"/><path d="M1.45 12.6 V1.45 H7.7" fill="none" stroke="#f3f8ff" stroke-width="0.8"/><path d="M8 0.9 V4.7 H12.1 Z" fill="#f7fbff"/><path d="M8 4.9 H12.1" stroke="#b4cff3" stroke-width="0.6"/><rect x="1.9" y="9.5" width="9.1" height="2.7" fill="#43a6f6"/><rect x="3" y="10.35" width="6.9" height="0.9" fill="#79c2fb"/><path d="M1.45 12.75 H11.5" stroke="#f3f8ff" stroke-width="0.6"/></svg></div>
<div class="t" style="left:45.80px;top:490.33px;transform:scaleX(0.9483)">Global Coverage</div>
<div class="hl" style="left:22.50px;top:511.14px;width:5.70px"></div>
<div class="ex" style="left:13.60px;top:507.19px"><i class="h"></i><i class="v"></i></div>
<div class="ic" style="left:28.20px;top:503.74px"><svg width="13" height="14" viewBox="0 0 13 14"><defs><linearGradient id="u29" x1="0" x2="1" y1="0" y2="1"><stop offset="0" stop-color="#dbe9fc"/><stop offset="1" stop-color="#cbdff9"/></linearGradient></defs><path d="M1.1 0.5 H8 L12.4 4.7 V12.9 Q12.4 13.5 11.8 13.5 H1.1 Q0.5 13.5 0.5 12.9 V1.1 Q0.5 0.5 1.1 0.5 Z" fill="url(#u29)" stroke="#2f70d2" stroke-width="0.9"/><path d="M1.45 12.6 V1.45 H7.7" fill="none" stroke="#f3f8ff" stroke-width="0.8"/><path d="M8 0.9 V4.7 H12.1 Z" fill="#f7fbff"/><path d="M8 4.9 H12.1" stroke="#b4cff3" stroke-width="0.6"/><rect x="1.9" y="9.5" width="9.1" height="2.7" fill="#43a6f6"/><rect x="3" y="10.35" width="6.9" height="0.9" fill="#79c2fb"/><path d="M1.45 12.75 H11.5" stroke="#f3f8ff" stroke-width="0.6"/></svg></div>
<div class="t" style="left:45.80px;top:504.94px;transform:scaleX(0.9265)">Numerical Listing</div>
<div class="hl" style="left:22.50px;top:525.75px;width:5.70px"></div>
<div class="ex" style="left:13.60px;top:521.80px"><i class="h"></i><i class="v"></i></div>
<div class="ic" style="left:28.20px;top:518.35px"><svg width="13" height="14" viewBox="0 0 13 14"><defs><linearGradient id="u30" x1="0" x2="1" y1="0" y2="1"><stop offset="0" stop-color="#dbe9fc"/><stop offset="1" stop-color="#cbdff9"/></linearGradient></defs><path d="M1.1 0.5 H8 L12.4 4.7 V12.9 Q12.4 13.5 11.8 13.5 H1.1 Q0.5 13.5 0.5 12.9 V1.1 Q0.5 0.5 1.1 0.5 Z" fill="url(#u30)" stroke="#2f70d2" stroke-width="0.9"/><path d="M1.45 12.6 V1.45 H7.7" fill="none" stroke="#f3f8ff" stroke-width="0.8"/><path d="M8 0.9 V4.7 H12.1 Z" fill="#f7fbff"/><path d="M8 4.9 H12.1" stroke="#b4cff3" stroke-width="0.6"/><rect x="1.9" y="9.5" width="9.1" height="2.7" fill="#43a6f6"/><rect x="3" y="10.35" width="6.9" height="0.9" fill="#79c2fb"/><path d="M1.45 12.75 H11.5" stroke="#f3f8ff" stroke-width="0.6"/></svg></div>
<div class="t" style="left:45.80px;top:519.55px;transform:scaleX(0.9280)">Shock Mounts (LS)</div>
<div class="hl" style="left:22.50px;top:540.36px;width:5.70px"></div>
<div class="ex" style="left:13.60px;top:536.41px"><i class="h"></i><i class="v"></i></div>
<div class="ic" style="left:28.20px;top:532.96px"><svg width="13" height="14" viewBox="0 0 13 14"><defs><linearGradient id="u31" x1="0" x2="1" y1="0" y2="1"><stop offset="0" stop-color="#dbe9fc"/><stop offset="1" stop-color="#cbdff9"/></linearGradient></defs><path d="M1.1 0.5 H8 L12.4 4.7 V12.9 Q12.4 13.5 11.8 13.5 H1.1 Q0.5 13.5 0.5 12.9 V1.1 Q0.5 0.5 1.1 0.5 Z" fill="url(#u31)" stroke="#2f70d2" stroke-width="0.9"/><path d="M1.45 12.6 V1.45 H7.7" fill="none" stroke="#f3f8ff" stroke-width="0.8"/><path d="M8 0.9 V4.7 H12.1 Z" fill="#f7fbff"/><path d="M8 4.9 H12.1" stroke="#b4cff3" stroke-width="0.6"/><rect x="1.9" y="9.5" width="9.1" height="2.7" fill="#43a6f6"/><rect x="3" y="10.35" width="6.9" height="0.9" fill="#79c2fb"/><path d="M1.45 12.75 H11.5" stroke="#f3f8ff" stroke-width="0.6"/></svg></div>
<div class="t" style="left:45.80px;top:534.16px;transform:scaleX(0.9397)">Shock Mounts (S, L, XP, CP)</div>
<div class="hl" style="left:22.50px;top:554.97px;width:5.70px"></div>
<div class="ex" style="left:13.60px;top:551.02px"><i class="h"></i><i class="v"></i></div>
<div class="ic" style="left:28.20px;top:547.57px"><svg width="13" height="14" viewBox="0 0 13 14"><defs><linearGradient id="u32" x1="0" x2="1" y1="0" y2="1"><stop offset="0" stop-color="#dbe9fc"/><stop offset="1" stop-color="#cbdff9"/></linearGradient></defs><path d="M1.1 0.5 H8 L12.4 4.7 V12.9 Q12.4 13.5 11.8 13.5 H1.1 Q0.5 13.5 0.5 12.9 V1.1 Q0.5 0.5 1.1 0.5 Z" fill="url(#u32)" stroke="#2f70d2" stroke-width="0.9"/><path d="M1.45 12.6 V1.45 H7.7" fill="none" stroke="#f3f8ff" stroke-width="0.8"/><path d="M8 0.9 V4.7 H12.1 Z" fill="#f7fbff"/><path d="M8 4.9 H12.1" stroke="#b4cff3" stroke-width="0.6"/><rect x="1.9" y="9.5" width="9.1" height="2.7" fill="#43a6f6"/><rect x="3" y="10.35" width="6.9" height="0.9" fill="#79c2fb"/><path d="M1.45 12.75 H11.5" stroke="#f3f8ff" stroke-width="0.6"/></svg></div>
<div class="t" style="left:45.80px;top:548.77px;transform:scaleX(0.9431)">Cartridge Dimensioning</div>
<div class="hl" style="left:22.50px;top:569.58px;width:5.70px"></div>
<div class="ex" style="left:13.60px;top:565.63px"><i class="h"></i><i class="v"></i></div>
<div class="ic" style="left:28.20px;top:562.18px"><svg width="13" height="14" viewBox="0 0 13 14"><defs><linearGradient id="u33" x1="0" x2="1" y1="0" y2="1"><stop offset="0" stop-color="#dbe9fc"/><stop offset="1" stop-color="#cbdff9"/></linearGradient></defs><path d="M1.1 0.5 H8 L12.4 4.7 V12.9 Q12.4 13.5 11.8 13.5 H1.1 Q0.5 13.5 0.5 12.9 V1.1 Q0.5 0.5 1.1 0.5 Z" fill="url(#u33)" stroke="#2f70d2" stroke-width="0.9"/><path d="M1.45 12.6 V1.45 H7.7" fill="none" stroke="#f3f8ff" stroke-width="0.8"/><path d="M8 0.9 V4.7 H12.1 Z" fill="#f7fbff"/><path d="M8 4.9 H12.1" stroke="#b4cff3" stroke-width="0.6"/><rect x="1.9" y="9.5" width="9.1" height="2.7" fill="#43a6f6"/><rect x="3" y="10.35" width="6.9" height="0.9" fill="#79c2fb"/><path d="M1.45 12.75 H11.5" stroke="#f3f8ff" stroke-width="0.6"/></svg></div>
<div class="t" style="left:45.80px;top:563.38px;transform:scaleX(0.9579)">Replacement Struts</div>
<div class="hl" style="left:22.50px;top:584.19px;width:5.70px"></div>
<div class="ex" style="left:13.60px;top:580.24px"><i class="h"></i><i class="v"></i></div>
<div class="ic" style="left:28.20px;top:576.79px"><svg width="13" height="14" viewBox="0 0 13 14"><defs><linearGradient id="u34" x1="0" x2="1" y1="0" y2="1"><stop offset="0" stop-color="#dbe9fc"/><stop offset="1" stop-color="#cbdff9"/></linearGradient></defs><path d="M1.1 0.5 H8 L12.4 4.7 V12.9 Q12.4 13.5 11.8 13.5 H1.1 Q0.5 13.5 0.5 12.9 V1.1 Q0.5 0.5 1.1 0.5 Z" fill="url(#u34)" stroke="#2f70d2" stroke-width="0.9"/><path d="M1.45 12.6 V1.45 H7.7" fill="none" stroke="#f3f8ff" stroke-width="0.8"/><path d="M8 0.9 V4.7 H12.1 Z" fill="#f7fbff"/><path d="M8 4.9 H12.1" stroke="#b4cff3" stroke-width="0.6"/><rect x="1.9" y="9.5" width="9.1" height="2.7" fill="#43a6f6"/><rect x="3" y="10.35" width="6.9" height="0.9" fill="#79c2fb"/><path d="M1.45 12.75 H11.5" stroke="#f3f8ff" stroke-width="0.6"/></svg></div>
<div class="t" style="left:45.80px;top:577.99px;transform:scaleX(0.9497)">Specifications</div>
</div>
<div id="right">
<div class="lb" style="left:269.5px;top:8.5px;transform:scaleX(0.9125)">Grid Rows</div>
<div class="grid" style="left:265px;top:31.4px;width:280.7px;height:127.6px">
<div style="position:absolute;left:-265px;top:-31.4px">
<div style="left:265.3px;top:31.60px;width:258.5px;height:19.90px;background:#292929"></div>
<div style="left:265.3px;top:50.70px;width:18.4px;height:61.50px;background:#292929"></div>
<div class="gh" style="left:265.7px;top:32.2px;width:16.4px;height:18.5px"><span></span></div>
<div class="gh" style="left:283.9px;top:32.2px;width:57.9px;height:18.5px"><span>Index</span></div>
<div class="gh" style="left:344.0px;top:32.2px;width:107.0px;height:18.5px"><span>Size Type</span></div>
<div class="gh" style="left:452.4px;top:32.2px;width:70.8px;height:18.5px"><span>Value</span></div>
<div class="rh" style="left:265.4px;top:52.00px;width:16.7px;height:18.80px"><svg class="arr" width="8" height="7" viewBox="0 0 8 7"><path d="M0 0L8 3.5L0 7L0.9 3.5Z" fill="#000"/></svg></div>
<div class="cell csel" style="left:283.3px;top:51.5px;width:58.80px;height:19.50px"><span>1</span></div>
<div class="cell" style="left:343.1px;top:51.5px;width:107.80px;height:19.50px"><span>Auto</span><div class="dd"><svg width="8" height="5" viewBox="0 0 8 5"><path d="M0.7 0.7L4 4L7.3 0.7" stroke="#4a4a4a" stroke-width="0.9" fill="none"/></svg></div></div>
<div class="cell" style="left:451.9px;top:51.5px;width:71.10px;height:19.50px"><span>0</span></div>
<div class="rh" style="left:265.4px;top:72.80px;width:16.7px;height:18.20px"></div>
<div class="cell" style="left:283.3px;top:72px;width:58.80px;height:19.20px"><span>2</span></div>
<div class="cell" style="left:343.1px;top:72px;width:107.80px;height:19.20px"><span>Auto</span><div class="dd"><svg width="8" height="5" viewBox="0 0 8 5"><path d="M0.7 0.7L4 4L7.3 0.7" stroke="#4a4a4a" stroke-width="0.9" fill="none"/></svg></div></div>
<div class="cell" style="left:451.9px;top:72px;width:71.10px;height:19.20px"><span>0</span></div>
<div class="rh" style="left:265.4px;top:93.00px;width:16.7px;height:18.00px"></div>
<div class="cell" style="left:283.3px;top:92.2px;width:58.80px;height:19.00px"><span>3</span></div>
<div class="cell" style="left:343.1px;top:92.2px;width:107.80px;height:19.00px"><span>Auto</span><div class="dd"><svg width="8" height="5" viewBox="0 0 8 5"><path d="M0.7 0.7L4 4L7.3 0.7" stroke="#4a4a4a" stroke-width="0.9" fill="none"/></svg></div></div>
<div class="cell" style="left:451.9px;top:92.2px;width:71.10px;height:19.00px"><span>0</span></div>
</div>
</div>
<div class="btn" style="left:552.2px;top:30.4px;width:23.5px;height:22.4px"><i class="ph"></i><i class="pv"></i></div>
<div class="btn" style="left:552.2px;top:59.4px;width:23.5px;height:22.2px"><i class="mh"></i></div>
<div class="btn dis" style="left:552.5px;top:111.8px;width:22.8px;height:22.5px"><svg width="10.4" height="8.4" viewBox="0 0 10.4 8.4"><path d="M5.2 0L10.4 8.4L5.2 5.9L0 8.4Z" fill="#8c8c8c"/></svg></div>
<div class="btn" style="left:552.1px;top:137.6px;width:23.7px;height:22.9px"><svg width="10.4" height="8" viewBox="0 0 10.4 8"><path d="M5.2 8L10.4 0L5.2 2.4L0 0Z" fill="#e6e6e6"/></svg></div>
<div class="lb" style="left:262.9px;top:170px;transform:scaleX(0.8991)">Grid Columns</div>
<div class="lb" style="left:334px;top:169.2px;color:#d8d8d8;transform:scaleX(0.9708)">Absolute: 41p0</div>
<div class="grid" style="left:265px;top:191.6px;width:280.7px;height:127px">
<div style="position:absolute;left:-265px;top:-191.6px">
<div style="left:265.3px;top:191.70px;width:258.5px;height:20.00px;background:#292929"></div>
<div style="left:265.3px;top:210.90px;width:18.4px;height:107.70px;background:#292929"></div>
<div class="gh" style="left:265.7px;top:192.3px;width:16.4px;height:18.599999999999994px"><span></span></div>
<div class="gh" style="left:283.9px;top:192.3px;width:57.9px;height:18.599999999999994px"><span>Index</span></div>
<div class="gh" style="left:344.0px;top:192.3px;width:107.0px;height:18.599999999999994px"><span>Size Type</span></div>
<div class="gh" style="left:452.4px;top:192.3px;width:70.8px;height:18.599999999999994px"><span>Value</span></div>
<div class="rh" style="left:265.4px;top:212.10px;width:16.7px;height:18.60px"><svg class="arr" width="8" height="7" viewBox="0 0 8 7"><path d="M0 0L8 3.5L0 7L0.9 3.5Z" fill="#000"/></svg></div>
<div class="cell csel" style="left:283.3px;top:211.6px;width:58.80px;height:19.30px"><span>1</span></div>
<div class="cell" style="left:343.1px;top:211.6px;width:107.80px;height:19.30px"><span>Absolute</span><div class="dd"><svg width="8" height="5" viewBox="0 0 8 5"><path d="M0.7 0.7L4 4L7.3 0.7" stroke="#4a4a4a" stroke-width="0.9" fill="none"/></svg></div></div>
<div class="cell" style="left:451.9px;top:211.6px;width:71.10px;height:19.30px"><span>2p8</span></div>
<div class="rh" style="left:265.4px;top:232.70px;width:16.7px;height:18.10px"></div>
<div class="cell" style="left:283.3px;top:231.9px;width:58.80px;height:19.10px"><span>2</span></div>
<div class="cell" style="left:343.1px;top:231.9px;width:107.80px;height:19.10px"><span>Absolute</span><div class="dd"><svg width="8" height="5" viewBox="0 0 8 5"><path d="M0.7 0.7L4 4L7.3 0.7" stroke="#4a4a4a" stroke-width="0.9" fill="none"/></svg></div></div>
<div class="cell" style="left:451.9px;top:231.9px;width:71.10px;height:19.10px"><span>24p6</span></div>
<div class="rh" style="left:265.4px;top:252.80px;width:16.7px;height:18.10px"></div>
<div class="cell" style="left:283.3px;top:252px;width:58.80px;height:19.10px"><span>3</span></div>
<div class="cell" style="left:343.1px;top:252px;width:107.80px;height:19.10px"><span>Absolute</span><div class="dd"><svg width="8" height="5" viewBox="0 0 8 5"><path d="M0.7 0.7L4 4L7.3 0.7" stroke="#4a4a4a" stroke-width="0.9" fill="none"/></svg></div></div>
<div class="cell" style="left:451.9px;top:252px;width:71.10px;height:19.10px"><span>2p4</span></div>
<div class="rh" style="left:265.4px;top:272.90px;width:16.7px;height:18.10px"></div>
<div class="cell" style="left:283.3px;top:272.1px;width:58.80px;height:19.10px"><span>4</span></div>
<div class="cell" style="left:343.1px;top:272.1px;width:107.80px;height:19.10px"><span>Absolute</span><div class="dd"><svg width="8" height="5" viewBox="0 0 8 5"><path d="M0.7 0.7L4 4L7.3 0.7" stroke="#4a4a4a" stroke-width="0.9" fill="none"/></svg></div></div>
<div class="cell" style="left:451.9px;top:272.1px;width:71.10px;height:19.10px"><span>2p4</span></div>
<div class="rh" style="left:265.4px;top:293.00px;width:16.7px;height:18.10px"></div>
<div class="cell" style="left:283.3px;top:292.2px;width:58.80px;height:19.10px"><span>5</span></div>
<div class="cell" style="left:343.1px;top:292.2px;width:107.80px;height:19.10px"><span>Absolute</span><div class="dd"><svg width="8" height="5" viewBox="0 0 8 5"><path d="M0.7 0.7L4 4L7.3 0.7" stroke="#4a4a4a" stroke-width="0.9" fill="none"/></svg></div></div>
<div class="cell" style="left:451.9px;top:292.2px;width:71.10px;height:19.10px"><span>4p7</span></div>
<div class="rh" style="left:265.4px;top:313.10px;width:16.7px;height:18.10px"></div>
<div class="cell" style="left:283.3px;top:312.3px;width:58.80px;height:19.10px"><span>6</span></div>
<div class="cell" style="left:343.1px;top:312.3px;width:107.80px;height:19.10px"><span>Absolute</span><div class="dd"><svg width="8" height="5" viewBox="0 0 8 5"><path d="M0.7 0.7L4 4L7.3 0.7" stroke="#4a4a4a" stroke-width="0.9" fill="none"/></svg></div></div>
<div class="cell" style="left:451.9px;top:312.3px;width:71.10px;height:19.10px"><span>4p7</span></div>
</div>
<div class="sb" style="left:265.60px;top:0;width:14.6px;height:127px"><div class="sbb" style="top:0.4px;height:13.9px"><svg width="7" height="4" viewBox="0 0 7 4"><path d="M0 4L3.5 0L7 4Z" fill="#171717"/></svg></div><div class="sbt" style="top:16.2px;height:13.9px"><i style="top:4.9px"></i><b style="top:6.1px"></b><i style="top:8.6px"></i><b style="top:9.8px"></b></div><div class="sbb" style="bottom:0.4px;height:13.8px"><svg width="7" height="4" viewBox="0 0 7 4"><path d="M0 0L3.5 4L7 0Z" fill="#171717"/></svg></div></div>
</div>
<div class="btn" style="left:552.2px;top:190.5px;width:23.5px;height:22.6px"><i class="ph"></i><i class="pv"></i></div>
<div class="btn" style="left:552.2px;top:219.4px;width:23.5px;height:22.2px"><i class="mh"></i></div>
<div class="btn dis" style="left:552.5px;top:272px;width:22.8px;height:22.3px"><svg width="10.4" height="8.4" viewBox="0 0 10.4 8.4"><path d="M5.2 0L10.4 8.4L5.2 5.9L0 8.4Z" fill="#8c8c8c"/></svg></div>
<div class="btn" style="left:552.1px;top:297.2px;width:23.7px;height:22.6px"><svg width="10.4" height="8" viewBox="0 0 10.4 8"><path d="M5.2 8L10.4 0L5.2 2.4L0 0Z" fill="#e6e6e6"/></svg></div>
<div class="lb" style="left:264.2px;top:331.7px;transform:scaleX(0.9447)">Borders</div>
<div class="grid gb" style="left:264.3px;top:350.8px;width:397.2px;height:78.7px"><div style="left:0;top:0;width:377.2px;height:20.6px;background:#292929"></div><div class="gh2" style="left:0.4px;top:0.4px;width:17.6px;height:19.8px"></div><div class="gh2" style="left:19.2px;top:0.4px;width:107px;height:19.8px"><span>Position</span></div><div class="gh2" style="left:127.3px;top:0.4px;width:71px;height:19.8px"><span>Line Weight</span></div><div class="gh2" style="left:199.3px;top:0.4px;width:88.5px;height:19.8px"><span>Line Color</span></div><div class="gh2" style="left:288.8px;top:0.4px;width:88px;height:19.8px"><span>Alignment</span></div></div>
<div class="btn" style="left:666px;top:351.8px;width:23.7px;height:22.8px"><i class="ph"></i><i class="pv"></i></div>
<div class="btn" style="left:666px;top:378.4px;width:23.7px;height:22.5px"><i class="mh"></i></div>
<div class="gbx" style="left:266.5px;top:459px;width:410px;height:129px"></div>
<div style="left:274.5px;top:455px;width:91.6px;height:8px;background:#333333"></div>
<div class="lb" style="left:277.6px;top:450px;transform:scaleX(0.9690)">Condition (Optional)</div>
<div class="btn txt" style="left:597px;top:442px;width:68px;height:22.5px"><span style="transform:scaleX(0.9384)">Remove</span></div>
<div class="lb" style="left:299.8px;top:489.2px;transform:scaleX(0.9349)">Data Column</div>
<div class="lb" style="left:299.8px;top:526.1px;transform:scaleX(0.9926)">Operator/Function</div>
<div class="lb" style="left:299.8px;top:562.4px;transform:scaleX(0.9244)">Value</div>
<div class="inp" style="left:399.2px;top:488.7px;width:180.2px;height:15.7px"><span>Fmt</span><div class="cb"><svg width="7" height="4" viewBox="0 0 7 4"><path d="M0 0L3.5 4L7 0Z" fill="#1a1a1a"/></svg></div></div>
<div class="inp" style="left:399.2px;top:524.6px;width:141.4px;height:16.5px"><span style="top:2.6px;font-size:9px;font-weight:bold">=</span><div class="cb"><svg width="7" height="4" viewBox="0 0 7 4"><path d="M0 0L3.5 4L7 0Z" fill="#1a1a1a"/></svg></div></div>
<div class="inp" style="left:399.2px;top:561.3px;width:180.2px;height:15.7px"><span>QL</span></div>
</div>
<div id="topline"></div><div id="topline2"></div>
</div></body></html>
